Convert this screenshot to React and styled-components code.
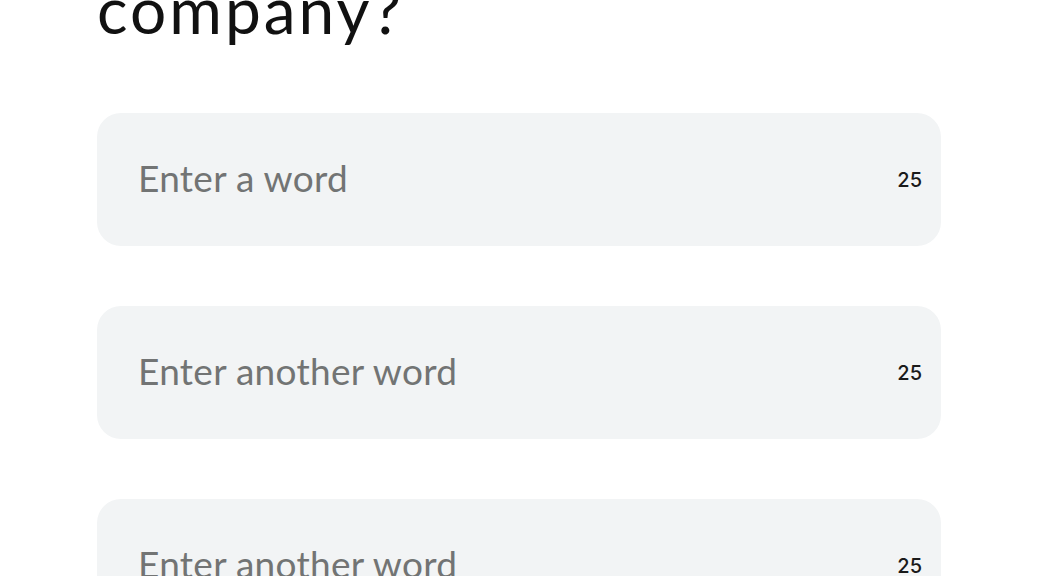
import React from "react";
import styled, { createGlobalStyle } from "styled-components";

const Global = createGlobalStyle`
  html, body { margin: 0; padding: 0; background: #ffffff; }
  body { font-family: Lato, "Noto Sans", sans-serif; overflow: hidden; }
`;

const Page = styled.main`
  width: 1038px;
  height: 576px;
  overflow: hidden;
  padding: 0 97px;
  box-sizing: border-box;
`;

const Title = styled.h1`
  margin: -30px 0 0;
  font-family: Lato, "Noto Sans", sans-serif;
  font-weight: 400;
  font-size: 64px;
  line-height: 80px;
  color: #111111;
  letter-spacing: 3px;
`;

const Fields = styled.div`
  display: flex;
  flex-direction: column;
  gap: 60px;
  margin-top: 63px;
`;

const Field = styled.label`
  display: flex;
  align-items: center;
  justify-content: space-between;
  height: 133px;
  border-radius: 24px;
  background: #f2f4f5;
  padding: 0 19px 4px 41px;
  box-sizing: border-box;
  flex-shrink: 0;
`;

const Input = styled.input`
  flex: 1;
  border: none;
  outline: none;
  background: transparent;
  font-family: Lato, "Noto Sans", sans-serif;
  font-size: 37px;
  letter-spacing: 0.3px;
  color: #222;
  padding: 0;
  &::placeholder { color: #727474; }
`;

const Count = styled.span`
  font-family: Inter, "Liberation Sans", sans-serif;
  font-size: 20px;
  font-weight: 500;
  color: #1a1a1a;
  padding-top: 4px;
`;

const fields = ["Enter a word", "Enter another word", "Enter another word"];

export default function App() {
  return (
    <Page>
      <Global />
      <Title>company?</Title>
      <Fields>
        {fields.map((p, i) => (
          <Field key={i}>
            <Input placeholder={p} maxLength={25} />
            <Count>25</Count>
          </Field>
        ))}
      </Fields>
    </Page>
  );
}
